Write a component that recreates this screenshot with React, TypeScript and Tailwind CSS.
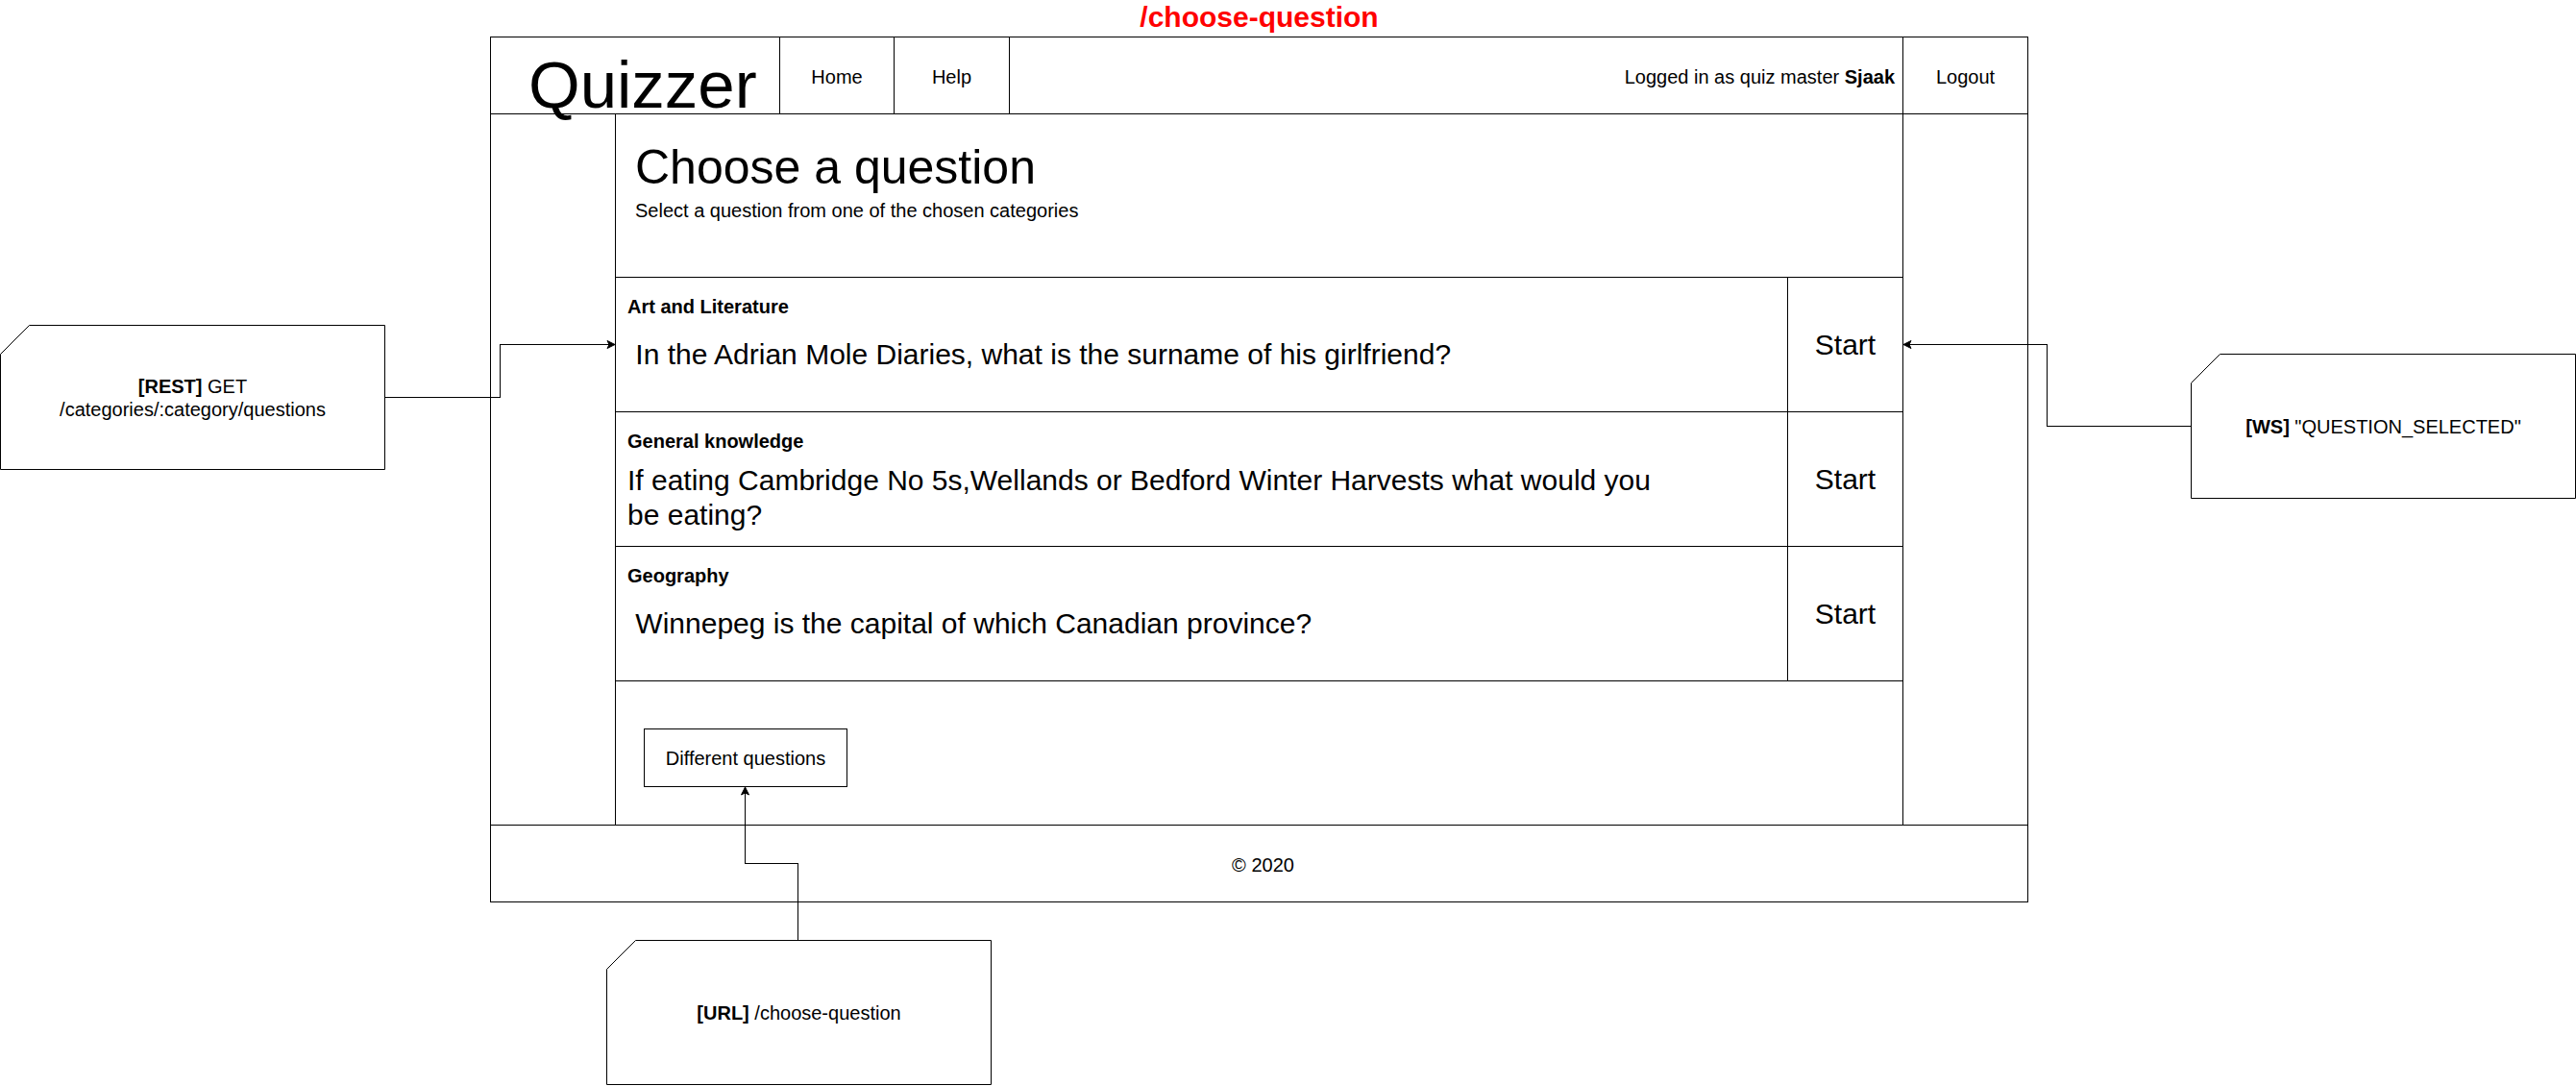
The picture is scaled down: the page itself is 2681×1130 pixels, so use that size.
// Wireframe: /choose-question page of Quizzer, with API annotations around it

type Question = {
  category: string;
  text: string;
  gap: string;
};

const questions: Question[] = [
  {
    category: "Art and Literature",
    text: " In the Adrian Mole Diaries, what is the surname of his girlfriend?",
    gap: "mt-[20px]",
  },
  {
    category: "General knowledge",
    text: "If eating Cambridge No 5s,Wellands or Bedford Winter Harvests what would you be eating?",
    gap: "mt-[11px]",
  },
  {
    category: "Geography",
    text: " Winnepeg is the capital of which Canadian province?",
    gap: "mt-[20px]",
  },
];

// cut-corner note shape used for the annotations
const Note = ({ className, children }: { className: string; children: React.ReactNode }) => (
  <div className={`absolute w-[401px] h-[151px] ${className}`}>
    <svg width="401" height="151" className="absolute inset-0">
      <polygon
        points="30.5,0.5 400.5,0.5 400.5,150.5 0.5,150.5 0.5,30.5"
        fill="white"
        stroke="black"
        strokeWidth="1"
      />
    </svg>
    <div className="absolute inset-0 flex items-center justify-center text-center text-[20px] leading-[24px]">
      <div>{children}</div>
    </div>
  </div>
);

const QuestionRow = ({ q }: { q: Question }) => (
  <div className="flex h-[140px] border-b border-black">
    <div className="flex-1 pl-[12px] pt-[18px]">
      <div className="text-[20px] leading-[24px] font-bold">{q.category}</div>
      <p className={`max-w-[1085px] whitespace-pre-wrap text-[30px] leading-[36px] ${q.gap}`}>{q.text}</p>
    </div>
    <div className="w-[120px] border-l border-black flex items-center justify-center text-[30px] leading-[36px]">
      Start
    </div>
  </div>
);

export default function App() {
  return (
    <div className="relative w-[2681px] h-[1130px] overflow-hidden bg-white text-black font-['Liberation_Sans',Arial,sans-serif]">
      <div className="ml-[510px] w-[1601px]">
        {/* page route title */}
        <div className="h-[38px] text-center text-[30px] leading-[35px] font-bold text-[#ff0000]">
          /choose-question
        </div>

        {/* browser frame */}
        <div className="flex flex-col border border-black">
          {/* HEADER */}
          <div className="flex h-[80px] border-b border-black text-[20px] leading-[24px]">
            <div className="w-[301px] border-r border-black pl-[39px] pt-[22px] text-[69px] leading-[56px]">
              Quizzer
            </div>
            <div className="w-[119px] border-r border-black flex items-center justify-center pt-[3px]">Home</div>
            <div className="w-[120px] border-r border-black flex items-center justify-center pt-[3px]">Help</div>
            <div className="flex-1 flex items-center justify-end pr-[8px] pt-[3px]">
              <span>
                Logged in as quiz master <b>Sjaak</b>
              </span>
            </div>
            <div className="w-[130px] border-l border-black flex items-center justify-center pt-[3px]">Logout</div>
          </div>

          {/* MAIN */}
          <div className="flex h-[739px]">
            <div className="w-[130px] border-r border-black" />
            <div className="w-[1340px] border-r border-black flex flex-col">
              <div className="h-[170px] border-b border-black pl-[20px] pt-[25px]">
                <h1 className="text-[50px] leading-[60px]">Choose a question</h1>
                <p className="mt-[3px] text-[20px] leading-[24px]">Select a question from one of the chosen categories</p>
              </div>

              {questions.map((q) => (
                <QuestionRow key={q.category} q={q} />
              ))}

              <div className="flex-1 pl-[29px] pt-[49px]">
                <button className="w-[212px] h-[61px] border border-black flex items-center justify-center text-[20px] leading-[24px]">
                  Different questions
                </button>
              </div>
            </div>
            <div className="flex-1" />
          </div>

          {/* FOOTER */}
          <div className="h-[80px] border-t border-black flex items-center justify-center pl-[8px] pt-[3px] text-[20px] leading-[24px]">
            © 2020
          </div>
        </div>
      </div>

      {/* annotations */}
      <Note className="left-[0px] top-[338px]">
        <b>[REST]</b> GET
        <br />
        /categories/:category/questions
      </Note>
      <Note className="left-[2280px] top-[368px]">
        <b>[WS]</b> "QUESTION_SELECTED"
      </Note>
      <Note className="left-[631px] top-[978px]">
        <b>[URL]</b> /choose-question
      </Note>

      {/* connectors */}
      <svg width="2681" height="1130" className="absolute inset-0 pointer-events-none">
        <g fill="none" stroke="black" strokeWidth="1" shapeRendering="crispEdges">
          <polyline points="401,413.5 520.5,413.5 520.5,358.5 634,358.5" />
          <polyline points="2280,443.5 2130.5,443.5 2130.5,358.5 1987,358.5" />
          <polyline points="830.5,978 830.5,898.5 775.5,898.5 775.5,825" />
        </g>
        <g fill="black" stroke="black" strokeWidth="1">
          <path d="M640 358.5 L632 354.5 L634 358.5 L632 362.5 Z" />
          <path d="M1981 358.5 L1989 354.5 L1987 358.5 L1989 362.5 Z" />
          <path d="M775.5 819 L771.5 827 L775.5 825 L779.5 827 Z" />
        </g>
      </svg>
    </div>
  );
}
